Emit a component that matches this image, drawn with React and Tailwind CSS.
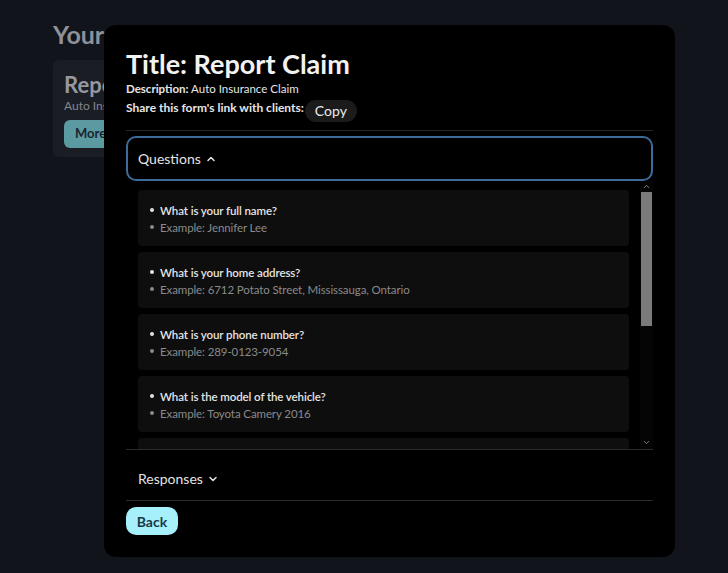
import { ChevronUp, ChevronDown } from 'lucide-react';

const questions = [
  { q: 'What is your full name?', ex: 'Example: Jennifer Lee' },
  { q: 'What is your home address?', ex: 'Example: 6712 Potato Street, Mississauga, Ontario' },
  { q: 'What is your phone number?', ex: 'Example: 289-0123-9054' },
  { q: 'What is the model of the vehicle?', ex: 'Example: Toyota Camery 2016' },
  { q: 'What is the license plate number?', ex: 'Example: ABCD 123' },
];

function Bullet({ children, className }) {
  return (
    <div className={`flex items-center ${className}`}>
      <span className="w-[4px] h-[4px] rounded-full bg-current mr-[6px] shrink-0" />
      {children}
    </div>
  );
}

export default function App() {
  return (
    <div className="relative w-[728px] h-[573px] overflow-hidden bg-[#11141a] font-['Lato',sans-serif]">
      {/* Page behind the dialog */}
      <div className="px-[53px] pt-[18px]">
        <h1 className="text-[25px] font-bold text-[#8e9197] leading-[32px]">Your Forms</h1>
        <div className="mt-[10px] w-[300px] h-[97px] rounded-md bg-[#1a1d24] px-[11px] pt-[12px]">
          <h2 className="text-[22px] font-bold text-[#95989e] leading-[26px]">Report Claim</h2>
          <p className="text-[12px] text-[#83868c] leading-[16px]">Auto Insurance Claim</p>
          <button className="mt-[6px] h-[28px] px-[11px] rounded-md bg-[#5a9aa0] text-[13px] font-bold text-[#1b2530]">More Info</button>
        </div>
      </div>

      {/* Dialog */}
      <div className="absolute left-[104px] top-[25px] w-[571px] h-[532px] rounded-xl bg-black px-[22px] pt-[22px] pb-[22px] flex flex-col">
        <h1 className="text-[27px] font-bold text-[#f2f2f2] leading-[34px]">Title: Report Claim</h1>
        <p className="text-[11.5px] text-[#e6e6e6] leading-[16px]">
          <span className="font-bold">Description:</span> Auto Insurance Claim
        </p>
        <div className="flex items-center mt-[3px]">
          <span className="text-[12px] font-bold text-[#e6e6e6] leading-[16px] -mt-[6px]">Share this form's link with clients:</span>
          <button className="ml-[1px] h-[22px] w-[52px] rounded-full bg-[#1b1b1b] text-[14px] text-[#ececec] leading-[22px]">Copy</button>
        </div>
        <div className="mt-[8px] h-px bg-[#2a2622]" />

        <button className="mt-[5px] h-[45px] w-full rounded-[10px] border-2 border-[#3d6b9b] flex items-center px-[10px] text-[14px] text-[#e4e4e4]">
          Questions
          <ChevronUp size={12} strokeWidth={3} className="ml-[4px]" />
        </button>

        <div className="h-[268px] flex">
          <div className="flex-1 overflow-hidden pl-[12px] pr-[11px] pt-[9px] flex flex-col gap-[6px]">
            {questions.map((item, i) => (
              <div key={i} className="shrink-0 h-[56px] rounded-[4px] bg-[#0e0e0e] flex flex-col justify-center pl-[12px] pt-[1px] text-[11.5px] tracking-[-0.1px] leading-[17px]">
                <Bullet className="text-[#e4e4e4] font-semibold">{item.q}</Bullet>
                <Bullet className="text-[#8a8a8a]">{item.ex}</Bullet>
              </div>
            ))}
          </div>
          {/* scrollbar */}
          <div className="w-[13px] flex flex-col items-center bg-[#050505]">
            <ChevronUp size={9} strokeWidth={2.5} className="text-[#8a8a8a] mt-[1px]" />
            <div className="mt-[1px] w-[11px] h-[134px] bg-[#7b7b7b]" />
            <div className="flex-1" />
            <ChevronDown size={9} strokeWidth={2.5} className="text-[#8a8a8a] mb-[2px]" />
          </div>
        </div>
        <div className="h-px bg-[#2a2a2a]" />

        <button className="w-full flex items-center px-[12px] pt-[20px] pb-[12px] text-[14px] text-[#e4e4e4] leading-[18px]">
          Responses
          <ChevronDown size={12} strokeWidth={3} className="ml-[4px]" />
        </button>
        <div className="h-px bg-[#2a2a2a]" />

        <div className="mt-[6px]">
          <button className="h-[28px] w-[52px] rounded-[10px] bg-[#a5f0fb] text-[14px] font-bold text-[#183848]">Back</button>
        </div>
      </div>
    </div>
  );
}
